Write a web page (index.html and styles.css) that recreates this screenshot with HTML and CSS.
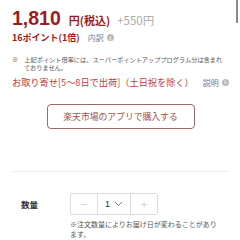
FILE: index.html
```html
<!DOCTYPE html>
<html lang="ja">

<head>
    <meta charset="UTF-8">
    <meta name="viewport" content="width=device-width, initial-scale=1.0">
    <title>商品</title>
    <link rel="stylesheet" href="styles.css">
</head>

<body>
    <div class="scroll-mark"></div>
    <div class="container">
        <div class="price-row">
            <span class="price">1,810</span>
            <span class="price-unit">円(税込)</span>
            <span class="postage">+550円</span>
        </div>
        <div class="points-row">
            <span class="points">16ポイント(1倍)</span>
            <span class="link">内訳</span>
            <span class="info-icon">i</span>
        </div>
        <p class="note">※　上記ポイント倍率には、スーパーポイントアッププログラム分は含まれておりません。</p>
        <div class="delivery-row">
            <span class="delivery">お取り寄せ[5～8日で出荷]（土日祝を除く）</span>
            <span class="link">説明</span>
            <span class="info-icon">i</span>
        </div>
        <div class="app-button-wrap">
            <div class="app-button">楽天市場のアプリで購入する</div>
        </div>
        <div class="divider"></div>
        <div class="quantity-row">
            <div class="quantity-label">数量</div>
            <div class="quantity-control">
                <div class="qty-btn">−</div>
                <div class="qty-value">1
                    <svg class="chevron" width="9" height="6" viewBox="0 0 9 6">
                        <path d="M1 1 L4.5 4.5 L8 1" fill="none" stroke="#777" stroke-width="1" />
                    </svg>
                </div>
                <div class="qty-btn">+</div>
            </div>
            <p class="quantity-note">※注文数量によりお届け日が変わることがあります。</p>
        </div>
    </div>
</body>

</html>
```

FILE: styles.css
```css
* {
    margin: 0;
    padding: 0;
    box-sizing: border-box;
}

body {
    font-family: 'Noto Sans CJK JP', sans-serif;
    color: #333;
    background-color: #fff;
}

.scroll-mark {
    position: absolute;
    top: 0;
    left: 236px;
    width: 2px;
    height: 23px;
    background-color: #8a8a8a;
}

.container {
    padding: 6px 11px 0 12px;
}

.price-row {
    display: flex;
    align-items: baseline;
    height: 24px;
    line-height: 24px;
}

.price {
    font-family: 'Liberation Sans', sans-serif;
    font-size: 19.5px;
    font-weight: 700;
    color: #9e1b1b;
}

.price-unit {
    margin-left: 8px;
    font-size: 11px;
    font-weight: 700;
    color: #9e1b1b;
}

.postage {
    margin-left: 7px;
    font-size: 11.5px;
    color: #aaa;
}

.points-row {
    display: flex;
    align-items: center;
    height: 15px;
}

.points {
    font-size: 9px;
    font-weight: 700;
    color: #9e1b1b;
}

.link {
    flex-shrink: 0;
    margin-left: 8px;
    white-space: nowrap;
    font-size: 8px;
    color: #6a7aa0;
}

.info-icon {
    flex-shrink: 0;
    display: inline-flex;
    align-items: center;
    justify-content: center;
    width: 7px;
    height: 7px;
    margin-left: 3px;
    border-radius: 50%;
    background-color: #bbb;
    color: #fff;
    font-family: 'Liberation Sans', sans-serif;
    font-size: 5px;
    font-weight: 700;
}

.note {
    margin-top: 11px;
    padding: 0 4px 0 12px;
    text-indent: -12px;
    font-size: 6.2px;
    line-height: 7.5px;
    color: #555;
}

.delivery-row {
    display: flex;
    align-items: center;
    height: 12px;
    margin-top: 5px;
}

.delivery {
    white-space: nowrap;
    font-size: 9.2px;
    color: #bf3a3a;
}

.delivery-row .link {
    margin-left: 9px;
}

.app-button-wrap {
    display: flex;
    justify-content: center;
    margin-top: 16px;
}

.app-button {
    width: 148px;
    height: 25px;
    border: 1px solid #9a6b6b;
    border-radius: 4px;
    display: flex;
    align-items: center;
    justify-content: center;
    font-size: 8.8px;
    color: #a04f4f;
}

.divider {
    height: 1px;
    margin-top: 42px;
    background-color: #eee;
}

.quantity-row {
    display: grid;
    grid-template-columns: 58px auto;
    margin-top: 21px;
}

.quantity-label {
    display: flex;
    align-items: center;
    padding-left: 9px;
    font-size: 8.5px;
    font-weight: 700;
    color: #333;
}

.quantity-control {
    display: flex;
    width: 88px;
    height: 22px;
    border: 1px solid #ddd;
    border-radius: 2px;
}

.qty-btn {
    width: 26px;
    display: flex;
    align-items: center;
    justify-content: center;
    font-size: 11px;
    color: #ccc;
}

.qty-value {
    width: 35px;
    display: flex;
    align-items: center;
    justify-content: center;
    gap: 4px;
    border-left: 1px solid #ddd;
    border-right: 1px solid #ddd;
    font-family: 'Liberation Sans', sans-serif;
    font-size: 9px;
    color: #333;
}

.quantity-note {
    grid-column: 2;
    width: 150px;
    margin-top: 5px;
    font-size: 7px;
    line-height: 9.5px;
    color: #555;
}
```
